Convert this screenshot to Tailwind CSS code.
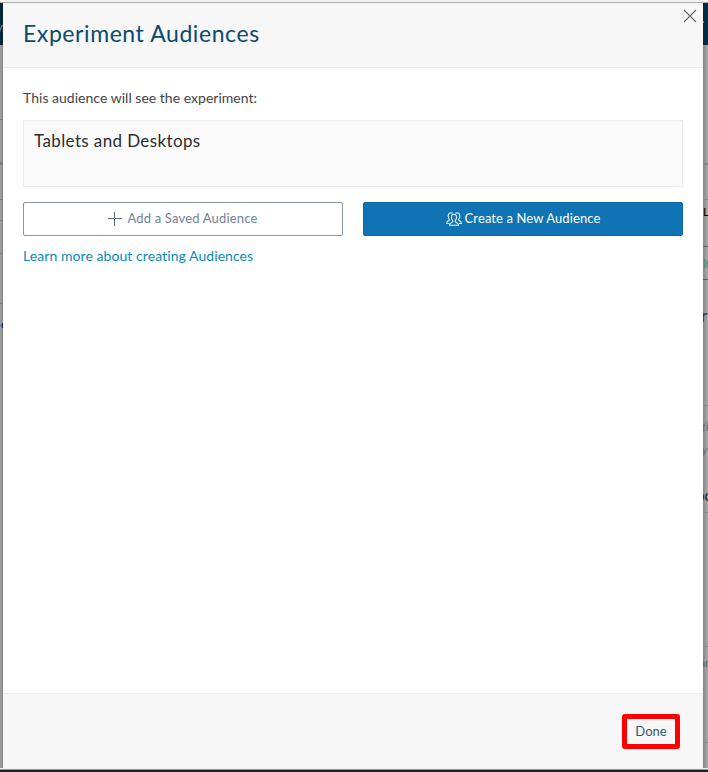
<!DOCTYPE html>
<html lang="en">
<head>
<meta charset="utf-8">
<title>Experiment Audiences</title>
<script src="https://cdn.jsdelivr.net/npm/@tailwindcss/browser@4"></script>
</head>
<body class="w-[708px] h-[772px] overflow-hidden bg-[#acacac] font-['Lato','Open_Sans',sans-serif]">
<div class="relative w-[708px] h-[772px] flex flex-col overflow-hidden">
  <div class="h-[2px] bg-[#f3f3f3] shrink-0"></div>
  <div class="h-px bg-[#acacac] shrink-0"></div>

  <div class="flex flex-1 min-h-0">
    <!-- Dimmed page, left edge -->
    <div class="relative w-[3px] shrink-0 overflow-hidden bg-linear-to-r from-[#a3a3a3] to-[#858585]">
      <div class="h-[42px] bg-[#002638]"></div>
      <span class="absolute right-0 top-[15px] text-[14px] leading-[18px] text-[#7b919d]">y</span>
      <div class="absolute top-[116px] w-full h-px bg-[#7c7c7c]"></div>
      <div class="absolute top-[159px] w-full h-[3px] bg-[#7c7c7c]"></div>
      <div class="absolute top-[196px] w-full h-px bg-[#7c7c7c]"></div>
      <div class="absolute top-[217px] w-full h-px bg-[#7c7c7c]"></div>
      <div class="absolute top-[250px] w-full h-px bg-[#7c7c7c]"></div>
      <div class="absolute top-[300px] w-full h-px bg-[#7c7c7c]"></div>
      <div class="absolute top-[320px] right-0 w-px h-[5px] bg-[#191552]"></div>
      <div class="absolute top-[321px] left-0 w-[2px] h-[3px] bg-[#668899]"></div>
    </div>

    <!-- Dialog -->
    <main class="w-[700px] flex flex-col bg-white shrink-0">
      <header class="h-[65px] shrink-0 flex justify-between bg-[#f7f7f7] border-b border-[#ebebeb] pl-5 pr-[6px]">
        <h1 class="pt-[16px] text-[23px] leading-[29px] tracking-[0.58px] text-[#0a4b6e] whitespace-nowrap">Experiment Audiences</h1>
        <svg class="mt-[6px] w-[14px] h-[14px]" viewBox="0 0 14 14" fill="none" stroke="#62656b" stroke-width="1.1"><path d="M1 1L13 13M13 1L1 13"/></svg>
      </header>
      <section class="flex-1 px-5 flex flex-col items-start">
        <p class="mt-[20px] text-[14px] leading-[20px] tracking-[0.02px] text-[#444]">This audience will see the experiment:</p>
        <div class="mt-[12px] w-full h-[67px] border border-[#ececec] bg-[#fafafa] pl-[10px] pt-[9px] text-[17px] leading-[22px] tracking-[0.38px] text-[#2d2d2d]"><span>Tablets and Desktops</span></div>
        <div class="mt-[15px] w-full grid grid-cols-2 gap-5">
          <button class="h-[34px] rounded-[2px] border border-[#8a95ab] flex items-center justify-center gap-[5px] text-[13px] tracking-[0.18px] text-[#75829a]">
            <svg class="w-[14px] h-[14px]" viewBox="0 0 14 14" fill="none" stroke="#606b81"><path d="M0 6.5H14M6.5 0V14"/></svg>
            <span>Add a Saved Audience</span>
          </button>
          <button class="h-[34px] rounded-[2px] border border-[#0867a5] bg-[#1074b4] flex items-center justify-center gap-[3px] text-[13px] tracking-[0.1px] text-white">
            <svg class="w-[16px] h-[15px]" viewBox="0 0 16 15" fill="none" stroke="#e5f2fa" stroke-width="1.1"><path d="M8 2.3C6.3 2.3 5.4 3.5 5.5 5.2C5.5 6.9 6.2 8 6.7 8.5V9.8C6.2 10.7 3.6 10.9 3.4 13.3H12.6C12.4 10.9 9.8 10.7 9.3 9.8V8.5C9.8 8 10.5 6.9 10.5 5.2C10.6 3.5 9.7 2.3 8 2.3Z"/><path d="M6.5 1.5C5.2.2 2.4.7 2.2 3.2C2.1 4.9 2.6 6.2 3.3 7V8.2C2.8 9 .7 9.1.6 11.5H3M9.5 1.5C10.8.2 13.6.7 13.8 3.2C13.9 4.9 13.4 6.2 12.7 7V8.2C13.2 9 15.3 9.1 15.4 11.5H13"/></svg>
            <span>Create a New Audience</span>
          </button>
        </div>
        <a class="mt-[10px] text-[14px] leading-[20px] tracking-[0.07px] text-[#078bc2]">Learn more about creating Audiences</a>
      </section>
      <footer class="h-[75px] shrink-0 bg-[#f7f7f7] border-t border-[#ebebeb] flex items-start justify-end pt-[20px] pr-[23px]">
        <button class="w-[58px] h-[35px] border-[5px] border-[#ff0000] rounded-[3px] bg-[#f7f7f7] flex items-center justify-center text-[13px] text-[#2e5b73]"><span>Done</span></button>
      </footer>
    </main>

    <!-- Dimmed page, right edge -->
    <div class="relative flex-1 overflow-hidden bg-linear-to-r from-[#858585] to-[#acacac]">
      <div class="h-[42px] bg-[#002b40]"></div>
      <div class="absolute top-[18px] left-0 w-px h-[2px] bg-[#8b6b54]"></div>
      <div class="absolute top-[160px] w-full h-[2px] bg-[#858585]"></div>
      <div class="absolute top-[196px] w-full h-px bg-[#858585]"></div>
      <span class="absolute left-0 top-[201px] text-[12px] leading-[16px] text-black">L</span>
      <div class="absolute top-[243px] w-full h-px bg-[#555a65]"></div>
      <span class="absolute left-0 top-[253px] text-[12px] leading-[16px] text-[#3c8270]">lt</span>
      <div class="absolute top-[276px] w-full h-px bg-[#555a65]"></div>
      <span class="absolute -left-[2px] top-[302px] text-[17px] leading-[22px] text-[#1c3652]">r</span>
      <div class="absolute top-[402px] w-full h-px bg-[#858585]"></div>
      <span class="absolute -left-px top-[416px] text-[11px] leading-[16px] italic text-[#666]">th</span>
      <span class="absolute -left-px top-[439px] text-[11px] leading-[16px] italic text-[#666]">y</span>
      <span class="absolute -left-[7px] top-[482px] text-[15px] leading-[20px] text-[#1d1d1d]">oo</span>
      <div class="absolute top-[509px] w-full h-px bg-[#858585]"></div>
      <div class="absolute top-[643px] w-full h-px bg-[#858585]"></div>
      <span class="absolute -left-[4px] top-[652px] text-[11px] leading-[16px] text-[#555]">nc</span>
      <div class="absolute top-[739px] w-full h-px bg-[#858585]"></div>
    </div>
  </div>

  <div class="h-px bg-[#f3f3f3] shrink-0"></div>
  <div class="h-px bg-[#999] shrink-0"></div>
  <div class="h-[2px] bg-[#222] shrink-0"></div>
</div>
</body>
</html>
